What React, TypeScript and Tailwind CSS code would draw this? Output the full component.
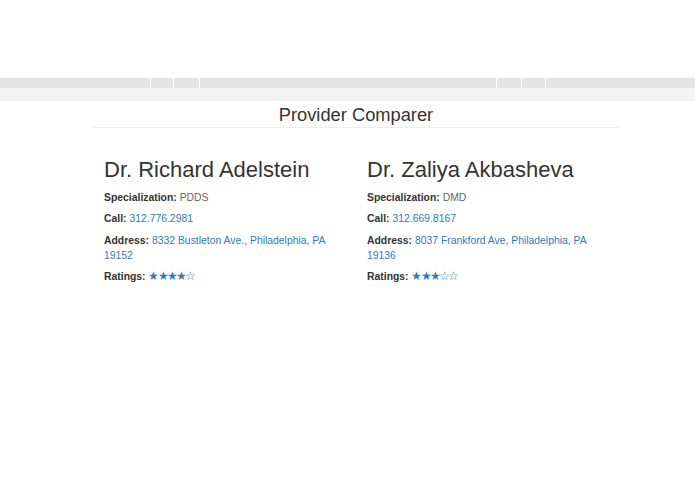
const providers = [
  {
    name: 'Dr. Richard Adelstein',
    specialization: 'PDDS',
    phone: '312.776.2981',
    address: '8332 Bustleton Ave., Philadelphia, PA 19152',
    rating: 4,
  },
  {
    name: 'Dr. Zaliya Akbasheva',
    specialization: 'DMD',
    phone: '312.669.8167',
    address: '8037 Frankford Ave, Philadelphia, PA 19136',
    rating: 3,
  },
];

const segments = ['w-[150px]', 'w-[22px]', 'w-[25px]', 'w-[296px]', 'w-[24px]', 'w-[23px]', 'flex-1'];

function Stars({ rating }: { rating: number }) {
  return (
    <span className="text-[12px] tracking-[-1.8px] text-[#337ab7]">
      {[0, 1, 2, 3, 4].map((i) => (
        <span key={i}>{i < rating ? '★' : '☆'}</span>
      ))}
    </span>
  );
}

export default function App() {
  return (
    <div className="min-h-[494px] bg-white text-[#333]" style={{ fontFamily: '"Liberation Sans", Arial, sans-serif' }}>
      <div className="pt-[78px]">
        <div className="flex h-[10px] gap-px bg-white">
          {segments.map((w, i) => (
            <div key={i} className={`${w} bg-[#e4e4e4]`} />
          ))}
        </div>
        <div className="h-[13px] bg-[#f3f3f3]" />
      </div>

      <div className="ml-[93px] w-[526px]">
        <h1 className="mt-[3px] text-center text-[18.3px] leading-[22px]">Provider Comparer</h1>
        <div className="mt-px h-px bg-[#eeeeee]" />

        <div className="mt-[29px] grid grid-cols-2">
          {providers.map((p) => (
            <div key={p.name} className="px-[11px] text-[10.4px] leading-[15px]">
              <h2 className="text-[22px] leading-[26px] text-[#333]">{p.name}</h2>
              <p className="mt-[7px]">
                <b>Specialization:</b> <span className="text-[#666]">{p.specialization}</span>
              </p>
              <p className="mt-[6px]">
                <b>Call:</b> <a className="text-[#337ab7]">{p.phone}</a>
              </p>
              <p className="mt-[7px]">
                <b>Address:</b> <a className="text-[#337ab7]">{p.address}</a>
              </p>
              <p className="mt-[6px]">
                <b>Ratings:</b> <Stars rating={p.rating} />
              </p>
            </div>
          ))}
        </div>
      </div>
    </div>
  );
}
